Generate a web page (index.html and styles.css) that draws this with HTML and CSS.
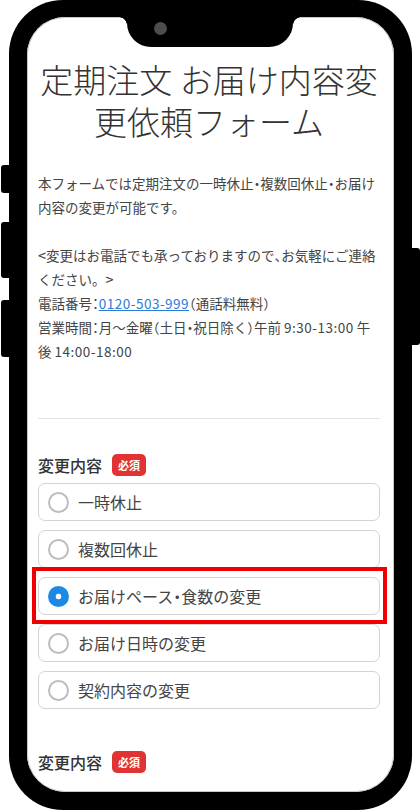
FILE: index.html
```html
<!DOCTYPE html>
<html lang="ja">
<head>
<meta charset="utf-8">
<title>定期注文 お届け内容変更依頼フォーム</title>
<link rel="stylesheet" href="styles.css">
</head>
<body>
<div class="phone">
  <span class="btn btn-mute"></span>
  <span class="btn btn-vol1"></span>
  <span class="btn btn-vol2"></span>
  <span class="btn btn-power"></span>
  <div class="screen">
    <div class="notch"><span class="camera"></span></div>
    <div class="content">
      <h1 class="title">定期注文 お届け内容変更依頼フォーム</h1>
      <div class="intro">
        <p>本フォームでは定期注文の一時休止<span class="hw">・</span>複数回休止<span class="hw">・</span>お届け内容の変更が可能です。</p>
        <p class="blank">&nbsp;</p>
        <p><span class="ang">&lt;</span>変更はお電話でも承っておりますので<span class="hw">、</span>お気軽にご連絡ください。<span class="ang">&gt;</span></p>
        <p>電話番号<span class="hw">：</span><a class="tel num" href="#">0120-503-999</a><span class="hw">（</span>通話料無料<span class="hw">）</span></p>
        <p>営業時間<span class="hw">：</span>月～金曜<span class="hw">（</span>土日<span class="hw">・</span>祝日除く<span class="hw">）</span>午前 <span class="num">9:30-13:00</span> 午後 <span class="num">14:00-18:00</span></p>
      </div>
      <hr class="divider">
      <div class="field">
        <div class="label">変更内容<span class="badge">必須</span></div>
        <div class="options">
          <div class="option"><span class="radio"></span><span class="opt-text">一時休止</span></div>
          <div class="option"><span class="radio"></span><span class="opt-text">複数回休止</span></div>
          <div class="option highlight"><span class="radio checked"></span><span class="opt-text">お届けペース<span class="hw">・</span>食数の変更</span></div>
          <div class="option"><span class="radio"></span><span class="opt-text">お届け日時の変更</span></div>
          <div class="option"><span class="radio"></span><span class="opt-text">契約内容の変更</span></div>
        </div>
      </div>
      <div class="field field2">
        <div class="label">変更内容<span class="badge">必須</span></div>
      </div>
    </div>
  </div>
</div>
</body>
</html>
```
FILE: styles.css
```css
html, body {
  margin: 0;
  padding: 0;
  background: #fff;
}
body {
  width: 420px;
  height: 811px;
  overflow: hidden;
  font-family: "Noto Sans CJK JP", "Noto Sans", sans-serif;
}
.phone {
  position: relative;
  margin-left: 9px;
  width: 403px;
  height: 810px;
  box-sizing: border-box;
  padding: 17px 18px 18px 18px;
  background: #000;
  border-radius: 54px;
}
.btn {
  position: absolute;
  background: #000;
  width: 10px;
}
.btn-mute { left: -8px; top: 165px; height: 28px; border-radius: 3px 0 0 3px; }
.btn-vol1 { left: -8px; top: 222px; height: 56px; border-radius: 3px 0 0 3px; }
.btn-vol2 { left: -8px; top: 300px; height: 57px; border-radius: 3px 0 0 3px; }
.btn-power { right: -8px; top: 248px; height: 97px; border-radius: 0 3px 3px 0; }
.screen {
  position: relative;
  height: 775px;
  background: #fff;
  border-radius: 38px;
  overflow: hidden;
  box-shadow: inset 0 0 0 1px #c8c8c8;
}
.notch {
  position: absolute;
  left: 100px;
  top: 0;
  width: 166px;
  height: 30px;
  background: #000;
  border-radius: 0 0 24px 24px;
}
.notch::before,
.notch::after {
  content: "";
  position: absolute;
  top: 0;
  width: 8px;
  height: 8px;
}
.notch::before {
  left: -8px;
  background: radial-gradient(circle at 0 100%, transparent 7.5px, #000 8px);
}
.notch::after {
  right: -8px;
  background: radial-gradient(circle at 100% 100%, transparent 7.5px, #000 8px);
}
.camera {
  position: absolute;
  left: 27px;
  top: 5px;
  width: 13px;
  height: 13px;
  border-radius: 50%;
  background: #4d4d4d;
}
.content {
  padding: 41px 14px 0 11px;
  color: #444;
}
.title {
  margin: 0;
  font-size: 33px;
  line-height: 42px;
  font-weight: 300;
  color: #333;
  text-align: center;
  letter-spacing: 0;
}
.intro {
  margin-top: 29px;
  font-size: 13.5px;
  line-height: 24px;
  color: #444;
}
.intro p {
  margin: 0;
}
.hw {
  font-feature-settings: "halt";
}
.num {
  letter-spacing: 0.5px;
}
.ang {
  font-size: 14.5px;
}
.tel {
  color: #2a7bd8;
  text-decoration: underline;
}
.divider {
  margin: 55px 0 0 0;
  border: 0;
  border-top: 1px solid #e2e2e2;
  height: 0;
}
.field {
  margin-top: 34px;
}
.field2 {
  margin-top: 41px;
}
.label {
  display: flex;
  align-items: center;
  height: 24px;
  font-size: 16px;
  font-weight: 500;
  color: #333;
}
.badge {
  display: inline-flex;
  align-items: center;
  justify-content: center;
  margin-left: 10px;
  width: 34px;
  height: 22px;
  border-radius: 5px;
  background: #e13333;
  color: #fff;
  font-size: 11px;
  font-weight: 700;
}
.options {
  margin-top: 6px;
  display: flex;
  flex-direction: column;
  gap: 9px;
}
.option {
  position: relative;
  display: flex;
  align-items: center;
  height: 38px;
  box-sizing: border-box;
  padding-left: 9px;
  border: 1px solid #d4d4d4;
  border-radius: 7px;
  background: #fff;
}
.highlight::after {
  content: "";
  position: absolute;
  left: -7px;
  top: -11px;
  right: -8px;
  bottom: -10px;
  border: 4px solid #f00000;
  pointer-events: none;
}
.radio {
  flex: none;
  width: 21px;
  height: 21px;
  box-sizing: border-box;
  border: 2px solid #bdbdbd;
  border-radius: 50%;
  background: #fff;
}
.radio.checked {
  border: 0;
  background: radial-gradient(circle, #fff 0 2.5px, #1e88e5 3.2px);
}
.opt-text {
  margin-left: 9px;
  font-size: 16px;
  color: #444;
}
```
